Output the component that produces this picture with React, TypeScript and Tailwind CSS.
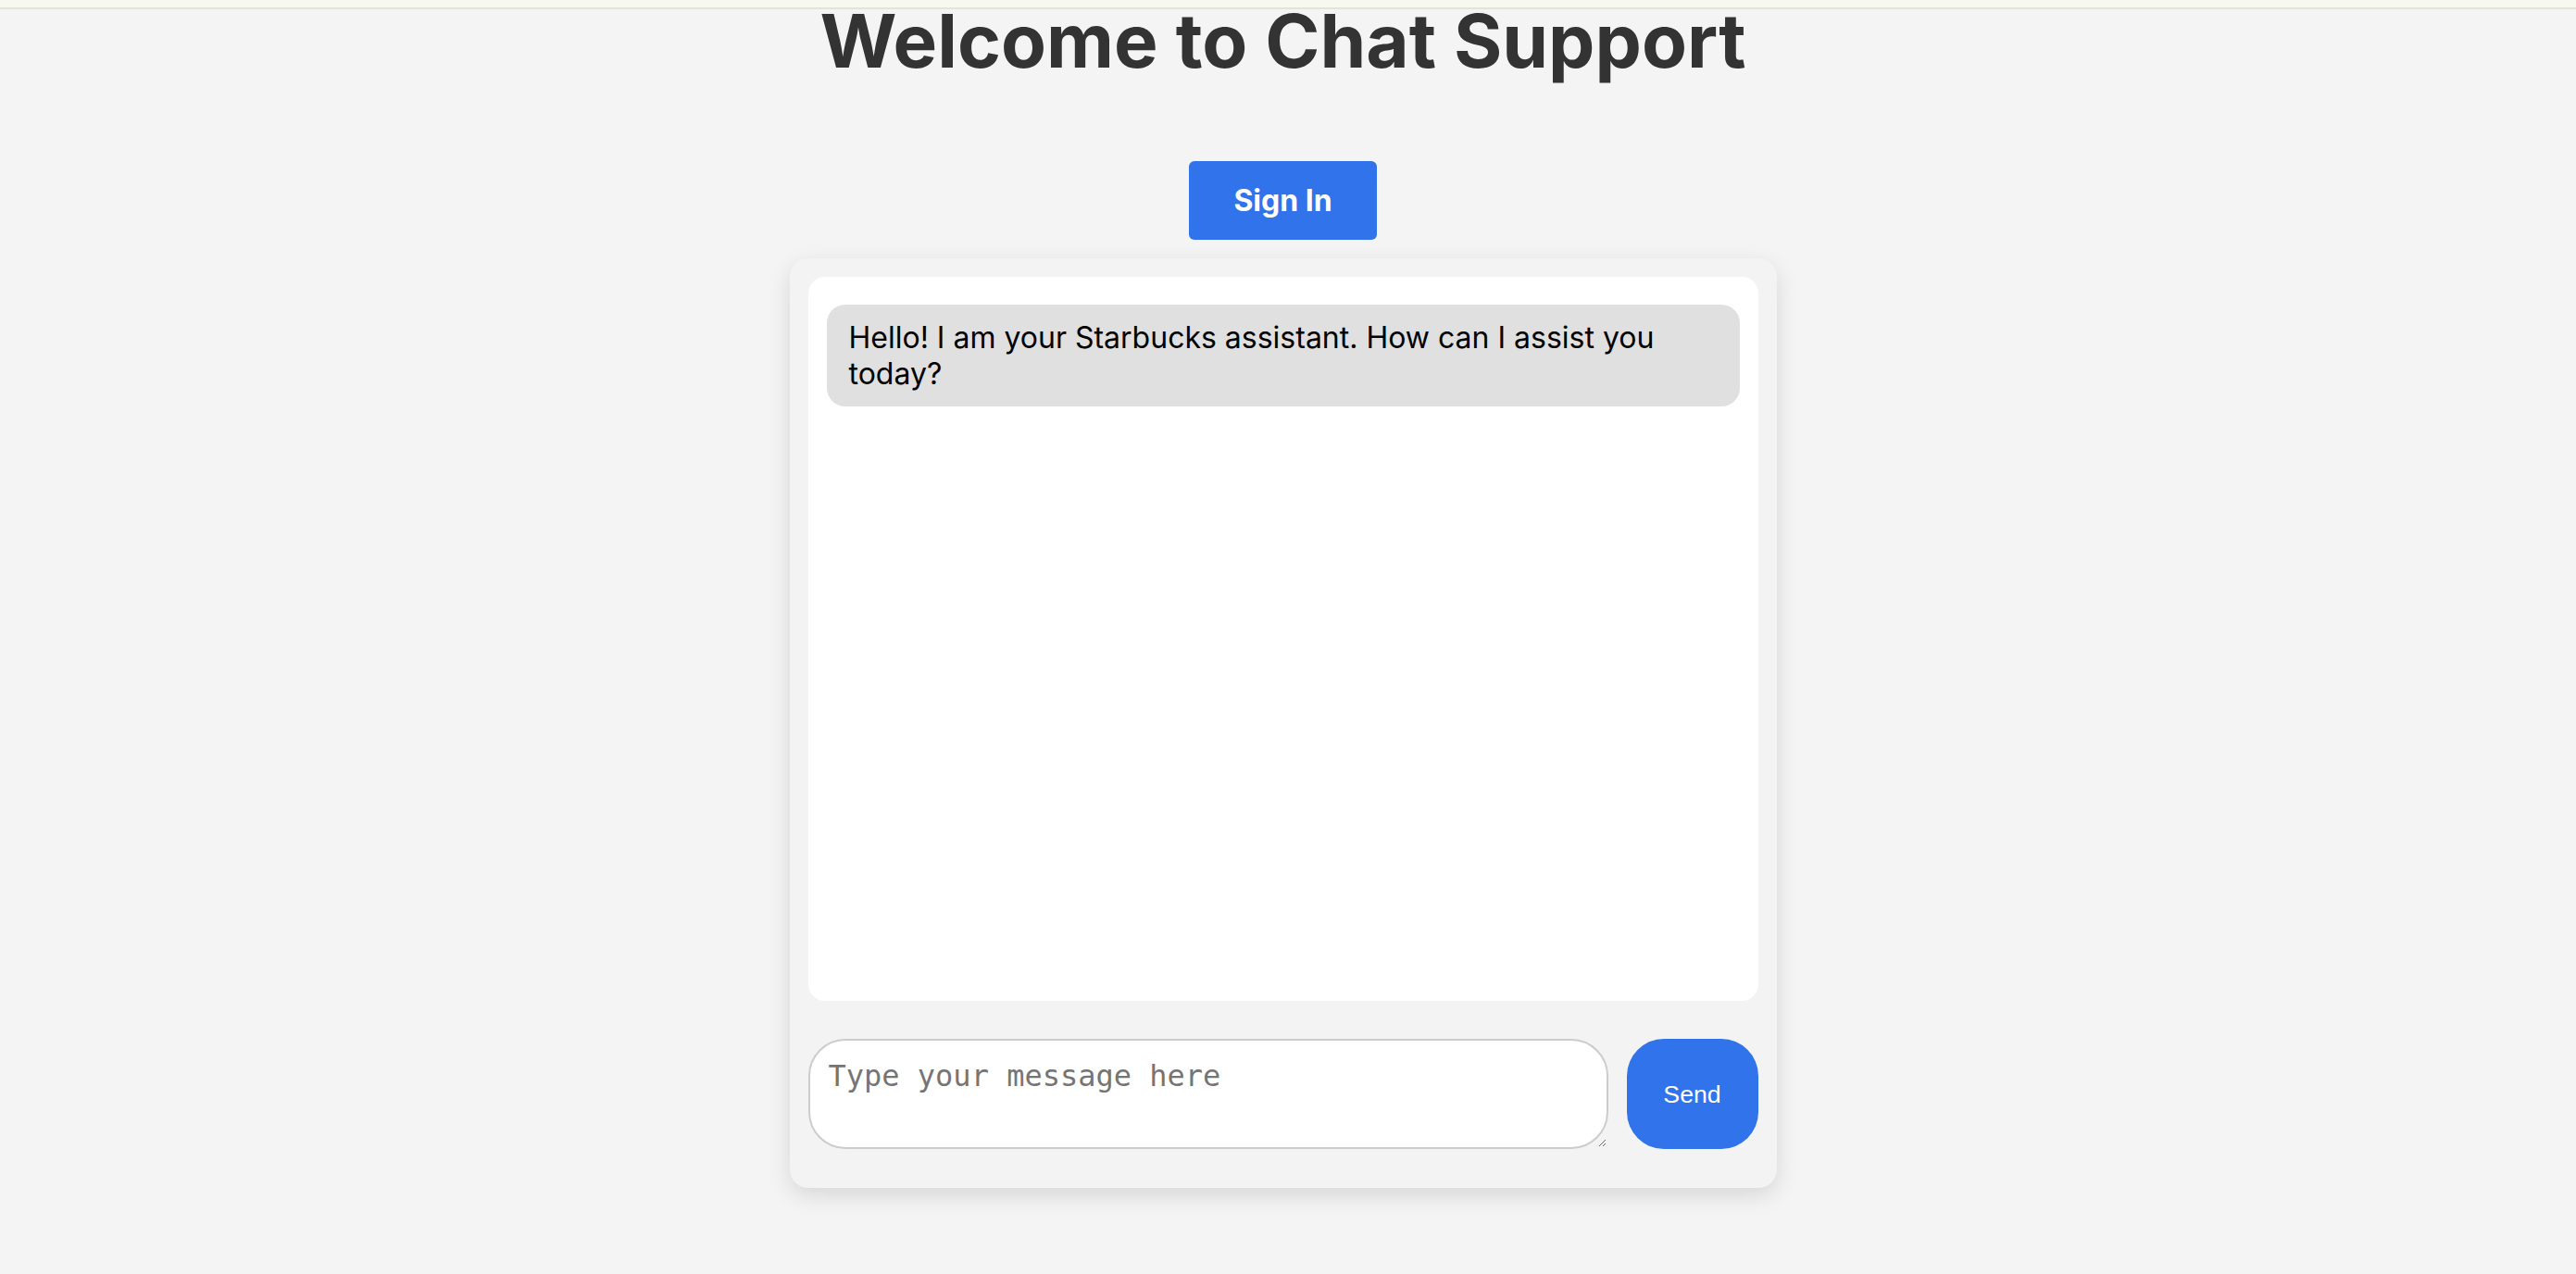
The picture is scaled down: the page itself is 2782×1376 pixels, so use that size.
import { useState } from "react";

const ChatSupport = () => {
  const [text, setText] = useState<string>("");
  return (
    <div className="min-h-screen bg-[#f4f4f4] font-['Inter',sans-serif] text-black">
      <div className="fixed top-0 left-0 right-0 h-[10px] bg-[#f7f9f0] border-b-2 border-[#e1e4d9] z-10" />
      <div className="flex flex-col items-center pr-[11px]">
        <h1 className="mt-[-5px] text-[80px] font-bold text-[#333333] leading-[97px]">Welcome to Chat Support</h1>
        <button className="mt-[82px] rounded-md bg-[#3073ea] px-12 py-6 text-[32px] font-bold leading-[37px] text-white">
          Sign In
        </button>
        <div className="mt-5 w-[1066px] rounded-[20px] bg-[#f3f3f3] px-5 pt-5 pb-[42px] shadow-[0_8px_24px_rgba(0,0,0,0.12)]">
          <div className="h-[782px] rounded-[18px] bg-white p-5">
            <div className="mt-[10px] rounded-[20px] bg-[#e0e0e0] px-6 py-4 text-[32px] leading-[39px]">
              Hello! I am your Starbucks assistant. How can I assist you today?
            </div>
          </div>
          <div className="mt-[41px] flex gap-5">
            <textarea
              value={text}
              onChange={(e) => setText(e.target.value)}
              placeholder="Type your message here"
              className="h-[119px] flex-1 rounded-[40px] border-2 border-[#cccccc] bg-white p-5 font-['DejaVu_Sans_Mono',monospace] text-[32px] leading-[37px] placeholder:text-[#757575] outline-none"
            />
            <button className="h-[119px] w-[142px] rounded-[40px] bg-[#3073ea] font-['Liberation_Sans',Arial,sans-serif] text-[26.67px] text-white">
              Send
            </button>
          </div>
        </div>
      </div>
    </div>
  );
};

export default function App() {
  return <ChatSupport />;
}
